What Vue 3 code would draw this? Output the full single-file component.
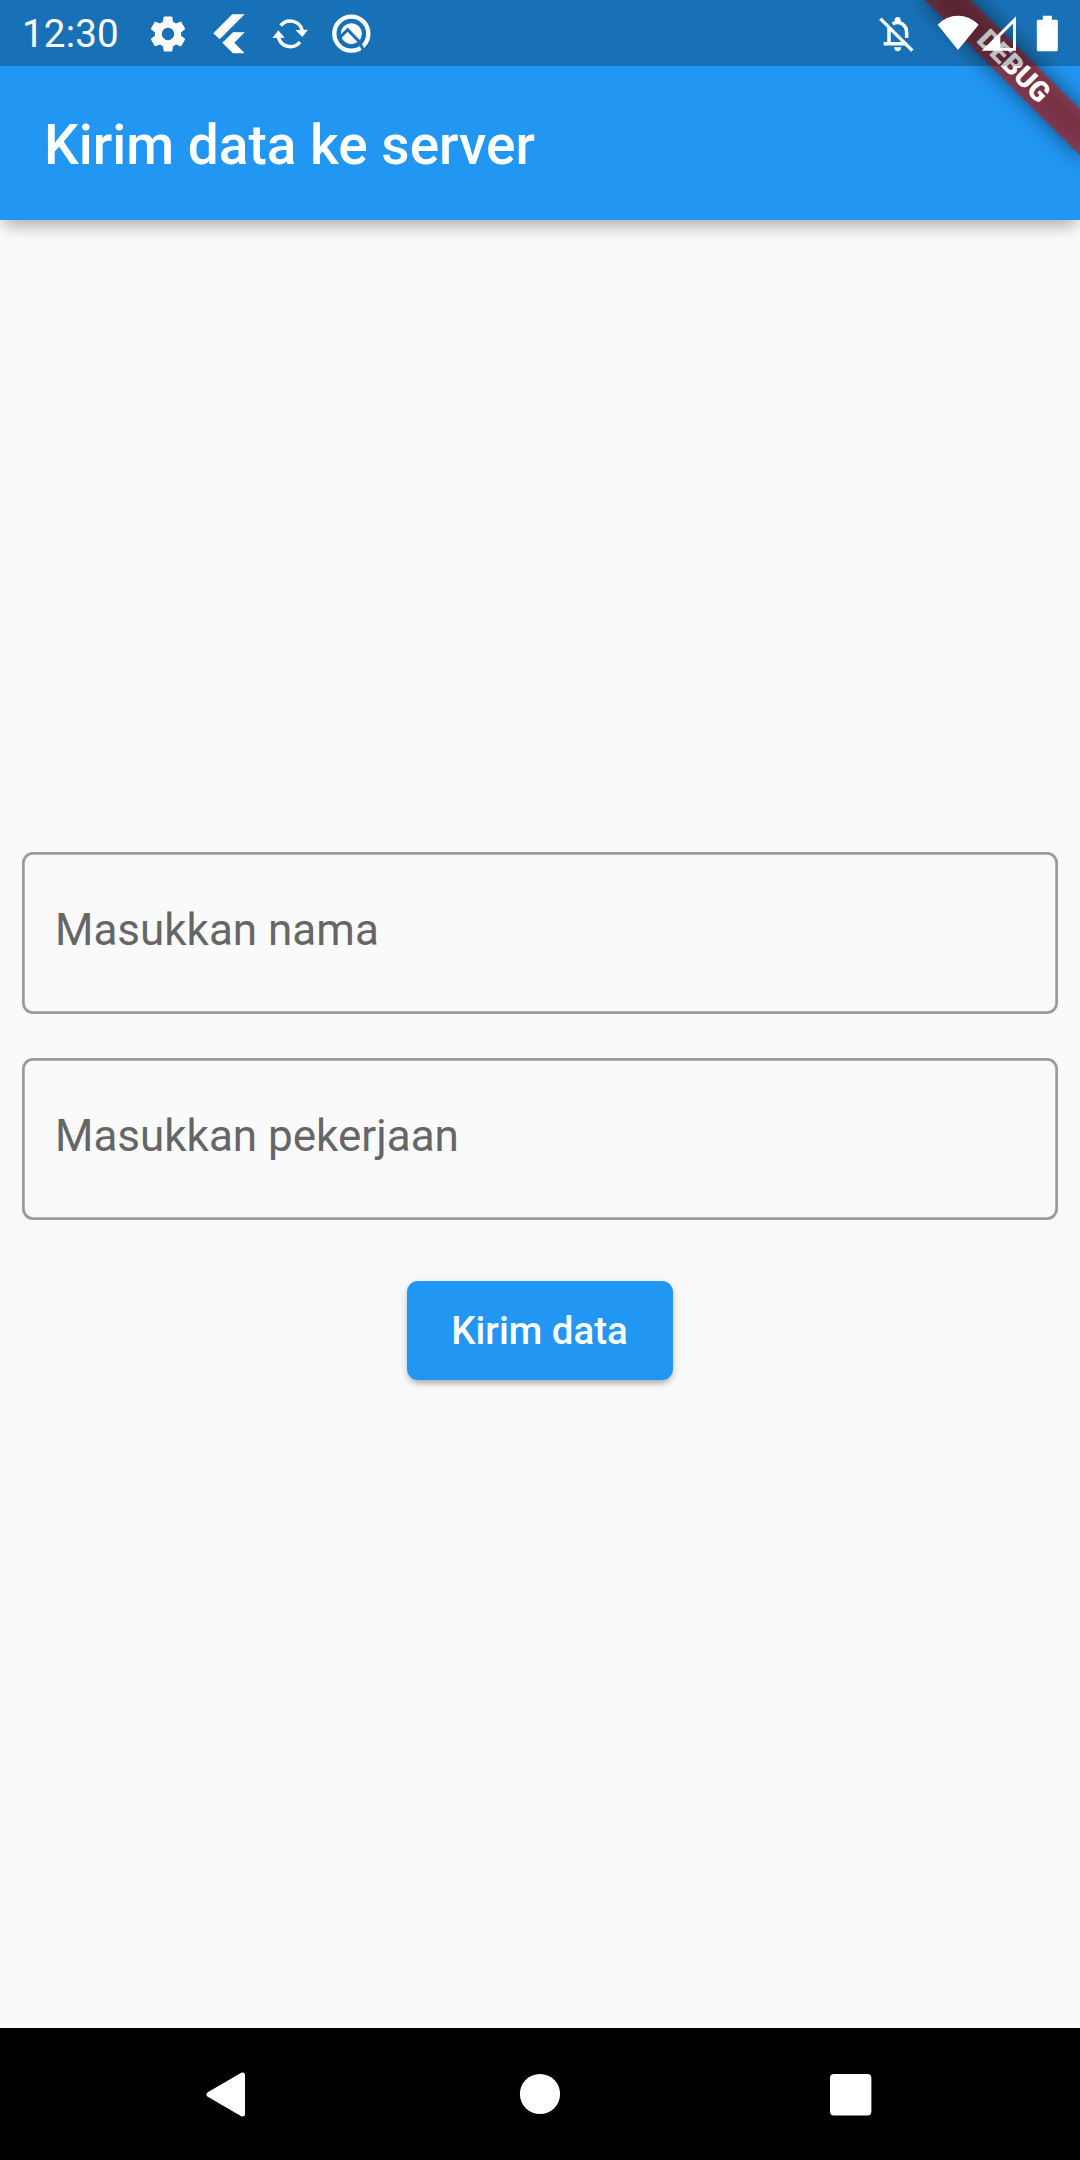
<script setup>
const fields = ['Masukkan nama', 'Masukkan pekerjaan']
</script>

<template>
  <div class="screen">
    <div class="ribbon"><span>DEBUG</span></div>

    <div class="status">
      <span class="clock">12:30</span>
      <div class="notifications">
        <svg class="icon" viewBox="-0.57 -0.57 25.14 25.14">
          <path d="M19.43 12.98c.04-.32.07-.64.07-.98s-.03-.66-.07-.98l2.11-1.65c.19-.15.24-.42.12-.64l-2-3.46c-.12-.22-.39-.3-.61-.22l-2.49 1c-.52-.4-1.08-.73-1.69-.98l-.38-2.65C14.46 2.18 14.25 2 14 2h-4c-.25 0-.46.18-.49.42l-.38 2.65c-.61.25-1.17.59-1.69.98l-2.49-1c-.23-.09-.49 0-.61.22l-2 3.46c-.13.22-.07.49.12.64l2.11 1.65c-.04.32-.07.65-.07.98s.03.66.07.98l-2.11 1.65c-.19.15-.24.42-.12.64l2 3.46c.12.22.39.3.61.22l2.49-1c.52.4 1.08.73 1.69.98l.38 2.65c.03.24.24.42.49.42h4c.25 0 .46-.18.49-.42l.38-2.65c.61-.25 1.17-.59 1.69-.98l2.49 1c.23.09.49 0 .61-.22l2-3.46c.12-.22.07-.49-.12-.64l-2.11-1.65zM12 15.5c-1.93 0-3.5-1.57-3.5-3.5s1.57-3.5 3.5-3.5 3.5 1.57 3.5 3.5-1.57 3.5-3.5 3.5z" />
        </svg>
        <svg class="icon" viewBox="22 35 132 132">
          <path d="M98 42h37L60 117 41 99zM100 96h35l-31 31 31 32h-35L68 127z" />
        </svg>
        <svg class="icon" viewBox="204 34 132 132">
          <path class="line" d="M242 75A37 37 0 0 1 307 90M300 124A37 37 0 0 1 235 109" stroke-width="10.500" />
          <path d="M286 88l38-1-17 22zM217 112l37-1-19-22z" />
        </svg>
        <svg class="icon" viewBox="387 34 132 132">
          <circle cx="454" cy="99" r="31.500" />
          <circle class="line" cx="454" cy="99" r="51" stroke-width="13" />
          <path class="cut" d="M416 114l27-27 34 35 17 34" stroke-width="9" />
        </svg>
      </div>
      <div class="system">
        <svg class="icon" viewBox="43 34 132 132">
          <path class="line" d="M88 80v49M72 129h69M99 70C118 57 141 73 141 96v16" stroke-width="10.500" />
          <path d="M105 63v-5a9 9 0 0 1 18 0v5zM103 140h22q-2 12-11 12t-11-12z" />
          <path class="line" d="M62 54l96 96" stroke-width="10" />
        </svg>
        <svg class="icon wifi" viewBox="229 34 132 132">
          <path d="M234 72Q260 45 295 45T357 72L295 148z" />
        </svg>
        <svg class="icon signal" viewBox="353 34 132 132">
          <path fill-rule="evenodd" d="M470 47v103H367zM461 69l-38 38v35h38z" />
        </svg>
        <svg class="icon battery" viewBox="495.500 34 132 132">
          <path d="M549 45h27v12h14q4 0 4 4v87q0 4-4 4h-55q-4 0-4-4V61q0-4 4-4h14z" />
        </svg>
      </div>
    </div>

    <header class="appbar"><h1>Kirim data ke server</h1></header>

    <main class="body">
      <div v-for="label in fields" :key="label" class="field">
        <span>{{ label }}</span>
      </div>
      <button type="button" class="submit">Kirim data</button>
    </main>

    <nav class="navbar">
      <svg viewBox="0 0 48 48"><path class="round" d="M7 24.500L40.500 5v39z" /></svg>
      <svg viewBox="0 0 48 48"><circle cx="26" cy="24" r="20.100" /></svg>
      <svg viewBox="0 0 48 48"><rect x="4" y="4" width="41.400" height="41.400" rx="4" /></svg>
    </nav>
  </div>
</template>

<style>
body {
  margin: 0;
}
</style>

<style scoped>
.screen {
  position: relative;
  display: flex;
  flex-direction: column;
  width: 1080px;
  height: 2160px;
  overflow: hidden;
  background: #fafafa;
  color: #fff;
  font-family: Roboto, sans-serif;
}

.status {
  position: relative;
  z-index: 3;
  display: flex;
  align-items: center;
  box-sizing: border-box;
  height: 66px;
  padding: 1px 11px 0 22px;
  background: rgba(0, 0, 0, 0.25);
}

.clock {
  width: 124px;
  font-size: 38.5px;
  line-height: 44px;
  letter-spacing: 0.2px;
}

.notifications,
.system {
  display: flex;
}

.notifications {
  gap: 17px;
}

.system {
  margin-left: auto;
}

.icon {
  display: block;
  width: 44px;
  height: 44px;
  fill: #fff;
  overflow: visible;
}

.line {
  fill: none;
  stroke: #fff;
}

.cut {
  fill: none;
  stroke: #1970b6;
}

.wifi {
  margin-left: 17.667px;
}

.signal {
  margin-left: -2.667px;
}

.battery {
  margin-left: 3.833px;
}

.appbar {
  position: relative;
  z-index: 1;
  display: flex;
  align-items: center;
  box-sizing: border-box;
  height: 220px;
  margin-top: -66px;
  padding: 66px 44px 0;
  background: #2196f3;
  box-shadow: 0 10px 14px -4px rgba(0, 0, 0, 0.2), 0 7px 22px -4px rgba(0, 0, 0, 0.15);
}

h1 {
  margin: 3px 0 0;
  font-size: 55px;
  font-weight: 500;
  line-height: 64px;
}

.ribbon {
  position: absolute;
  z-index: 2;
  top: 77px;
  left: 970px;
  width: 220px;
  height: 33px;
  transform: rotate(45deg);
  transform-origin: 110px -77px;
  text-align: center;
}

.ribbon::before,
.ribbon::after {
  content: '';
  position: absolute;
  inset: 0;
}

.ribbon::before {
  background: rgba(0, 0, 0, 0.5);
  filter: blur(10.9px);
}

.ribbon::after {
  background: rgba(183, 28, 28, 0.627);
}

.ribbon span {
  position: relative;
  z-index: 1;
  display: block;
  font-size: 28px;
  font-weight: 900;
  line-height: 33px;
}

.body {
  flex: 1;
  display: flex;
  flex-direction: column;
  justify-content: center;
  gap: 44px;
  padding: 0 22px;
}

.field {
  display: flex;
  align-items: center;
  box-sizing: border-box;
  height: 162px;
  padding: 0 33px 6px;
  border-radius: 11px;
  box-shadow: inset 0 0 0 2.75px #9b9b9b;
  color: #666;
  font-size: 44px;
}

.submit {
  align-self: center;
  width: 266px;
  height: 99px;
  margin: 16.5px 0;
  padding: 0 1px 0 0;
  border: 0;
  border-radius: 11px;
  background: #2196f3;
  box-shadow: 0 5px 6px -2px rgba(0, 0, 0, 0.25), 0 2px 8px rgba(0, 0, 0, 0.13);
  color: #fff;
  font: 500 38.5px/45px Roboto, sans-serif;
}

.navbar {
  display: flex;
  align-items: center;
  justify-content: space-between;
  box-sizing: border-box;
  height: 132px;
  padding: 0 206px 0 202px;
  background: #000;
}

.navbar svg {
  width: 48px;
  height: 48px;
  fill: #fff;
}

.round {
  stroke: #fff;
  stroke-width: 5px;
  stroke-linejoin: round;
}
</style>
